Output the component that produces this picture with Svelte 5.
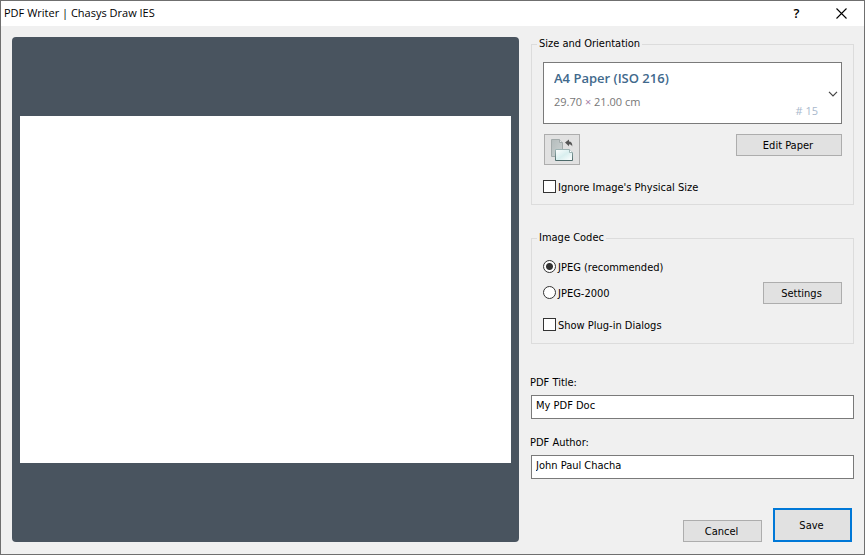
<script lang="ts">
  interface Paper {
    id: number;
    name: string;
    width: number; // cm
    height: number;
  }

  const papers: Paper[] = [{ id: 15, name: "A4 Paper (ISO 216)", width: 29.7, height: 21 }];

  let paperId = $state(15);
  let landscape = $state(true);
  let ignoreSize = $state(false);
  let codec = $state("jpeg");
  let showDialogs = $state(false);
  let title = $state("My PDF Doc");
  let author = $state("John Paul Chacha");

  const paper = $derived(papers.find((p) => p.id === paperId) ?? papers[0]);
  const w = $derived(landscape ? paper.width : paper.height);
  const h = $derived(landscape ? paper.height : paper.width);
</script>

<div class="window">
  <header class="titlebar">
    <h1>PDF Writer | Chasys Draw IES</h1>
    <button class="caption help" type="button" aria-label="Help">?</button>
    <button class="caption" type="button" aria-label="Close">
      <svg width="11" height="11" viewBox="0 0 11 11" aria-hidden="true">
        <path d="M.5.5l10 10M10.5.5l-10 10" stroke="#000" stroke-width="1.1" fill="none" />
      </svg>
    </button>
  </header>

  <form class="body" onsubmit={(e) => e.preventDefault()}>
    <div class="preview">
      <div class="page" style="aspect-ratio: {w} / {h};"></div>
    </div>

    <div class="side">
      <fieldset class="size">
        <legend>Size and Orientation</legend>
        <div class="combo">
          <select bind:value={paperId} aria-label="Paper">
            {#each papers as p}
              <option value={p.id}>{p.name}</option>
            {/each}
          </select>
          <span class="dims">{w.toFixed(2)} <i>×</i> {h.toFixed(2)} cm</span>
          <span class="number"># {paper.id}</span>
          <svg class="chevron" width="10" height="6" viewBox="0 0 10 6" aria-hidden="true">
            <path d="M1 .8l4 4 4-4" stroke="#444" stroke-width="1.2" fill="none" />
          </svg>
        </div>
        <div class="row">
          <button
            class="rotate"
            type="button"
            aria-label="Rotate paper"
            onclick={() => (landscape = !landscape)}
          >
            <svg width="24" height="24" viewBox="0 0 24 24" aria-hidden="true">
              <defs>
                <linearGradient id="back" x1="0" y1="0" x2="1" y2="1">
                  <stop offset="0" stop-color="#b4bcbc" />
                  <stop offset="1" stop-color="#cdd3d3" />
                </linearGradient>
                <linearGradient id="front" x1="0" y1="0" x2="1" y2="1">
                  <stop offset="0" stop-color="#fff" />
                  <stop offset=".5" stop-color="#d9efef" />
                  <stop offset="1" stop-color="#fff" />
                </linearGradient>
                <linearGradient id="edge" x1="0" y1="0" x2="0" y2="1">
                  <stop offset="0" stop-color="#9db4b4" />
                  <stop offset="1" stop-color="#4d6a6a" />
                </linearGradient>
              </defs>
              <path d="M1.5 1.5h8l3 3v14h-11z" fill="url(#back)" stroke="#a2aaaa" />
              <path d="M9.5 1.5v3h3" fill="#e4e8e8" stroke="#a2aaaa" />
              <path d="M5.5 11.5h14l3 3v8h-17z" fill="url(#front)" stroke="url(#edge)" />
              <path d="M19.5 11.5v3h3" fill="#fff" stroke="#9db4b4" />
              <path d="M15 4.6l4-3.2v2c2.2 0 3.5 1.7 3.3 5.1-.8-1.5-1.7-2.2-3.3-2.2v1.9z" fill="#555" />
            </svg>
          </button>
          <button class="btn edit" type="button">Edit Paper</button>
        </div>
        <label class="check">
          <input type="checkbox" bind:checked={ignoreSize} />
          Ignore Image's Physical Size
        </label>
      </fieldset>

      <fieldset class="codec">
        <legend>Image Codec</legend>
        <label class="check">
          <input type="radio" name="codec" value="jpeg" bind:group={codec} />
          JPEG (recommended)
        </label>
        <div class="row center">
          <label class="check">
            <input type="radio" name="codec" value="jpeg2000" bind:group={codec} />
            JPEG-2000
          </label>
          <button class="btn" type="button">Settings</button>
        </div>
        <label class="check">
          <input type="checkbox" bind:checked={showDialogs} />
          Show Plug-in Dialogs
        </label>
      </fieldset>

      <div class="fields">
        <div class="field">
          <label for="title">PDF Title:</label>
          <input id="title" type="text" bind:value={title} />
        </div>
        <div class="field">
          <label for="author">PDF Author:</label>
          <input id="author" type="text" bind:value={author} />
        </div>
      </div>

      <div class="actions">
        <button class="btn" type="button">Cancel</button>
        <button class="btn save" type="submit">Save</button>
      </div>
    </div>
  </form>
</div>

<style>
  :global(body) {
    margin: 0;
  }
  .window {
    box-sizing: border-box;
    min-height: 100vh;
    display: flex;
    flex-direction: column;
    border: 1px solid #6f6f6f;
    background: #f0f0f0;
    color: #000;
    font: 11px/14px "DejaVu Sans Condensed", "DejaVu Sans", sans-serif;
  }
  .window :is(button, input, select) {
    box-sizing: border-box;
    margin: 0;
    font: inherit;
    color: inherit;
  }
  .titlebar {
    display: flex;
    align-items: center;
    height: 25px;
    background: #fff;
  }
  h1 {
    flex: 1;
    margin: 0;
    padding: 0 0 2px 3px;
    font: 11px/16px "Open Sans", sans-serif;
  }
  .titlebar .caption {
    display: grid;
    place-items: center;
    width: 45px;
    height: 25px;
    padding: 0;
    border: 0;
    background: none;
  }
  .titlebar .help {
    padding-bottom: 2px;
    font: 600 13px/16px "Open Sans", sans-serif;
  }
  .body {
    flex: 1;
    display: grid;
    grid-template-columns: minmax(0, 1fr) 323px;
    gap: 12px;
    padding: 11px 10px 12px 11px;
  }
  .preview {
    display: flex;
    align-items: center;
    padding: 8px;
    border-radius: 4px;
    background: #49545f;
  }
  .page {
    width: 100%;
    background: #fff;
  }
  .side {
    display: flex;
    flex-direction: column;
  }
  fieldset {
    min-width: 0;
    margin: 0;
    border: 1px solid #dcdcdc;
  }
  legend {
    margin-left: -6px;
    padding: 0 2px;
  }
  .size {
    padding: 11px 11px 10px;
  }
  .codec {
    margin-top: 26px;
    padding: 15px 11px 11px;
  }
  .combo {
    position: relative;
  }
  .combo select {
    display: block;
    width: 100%;
    height: 62px;
    padding: 4px 30px 34px 10px;
    appearance: none;
    border: 1px solid #7a7a7a;
    border-radius: 0;
    background: #fff;
    color: #41698c;
    font: 600 13px/20px "Open Sans", sans-serif;
  }
  .combo span,
  .combo svg {
    position: absolute;
    pointer-events: none;
  }
  .dims {
    left: 11px;
    top: 32px;
    color: #777;
    font: 11px/16px "Open Sans", sans-serif;
  }
  .dims i {
    font-style: normal;
    color: #a77fa7;
  }
  .number {
    right: 24px;
    top: 41px;
    color: #a9b8cc;
    font: 11px/16px "Open Sans", sans-serif;
  }
  .chevron {
    right: 4px;
    top: 29px;
  }
  .row {
    display: flex;
    justify-content: space-between;
    align-items: flex-start;
  }
  .size .row {
    margin: 10px 0 15px 1px;
  }
  .center {
    align-items: center;
    margin: 8px 0 14px;
  }
  .btn {
    width: 79px;
    height: 22px;
    padding: 2px 2px 0 0;
    border: 1px solid #adadad;
    background: #e1e1e1;
  }
  .edit {
    width: 106px;
  }
  .rotate {
    display: grid;
    place-items: center;
    width: 36px;
    height: 31px;
    padding: 0;
    border: 1px solid #adadad;
    background: #e1e1e1;
  }
  .check {
    display: flex;
    align-items: flex-start;
    gap: 2px;
    height: 14px;
    line-height: 16px;
  }
  .check input {
    appearance: none;
    width: 13px;
    height: 13px;
    border: 1px solid #333;
    background: #fff;
  }
  .check input[type="radio"] {
    border-radius: 50%;
  }
  .check input[type="radio"]:checked {
    background: radial-gradient(circle, #333 3px, #fff 4px);
  }
  .check input[type="checkbox"]:checked {
    background: linear-gradient(#333, #333) center / 7px 7px no-repeat #fff;
  }
  .fields {
    display: grid;
    gap: 17px;
    margin: 32px 0 16px;
  }
  .field {
    display: grid;
    gap: 5px;
  }
  .field label {
    margin-left: -1px;
  }
  .field input {
    width: 100%;
    height: 24px;
    padding: 0 4px 4px;
    border: 1px solid #7a7a7a;
    background: #fff;
  }
  .actions {
    display: flex;
    justify-content: flex-end;
    align-items: flex-end;
    gap: 11px;
    margin-top: auto;
    padding-right: 2px;
  }
  .save {
    height: 34px;
    border: 2px solid #0078d7;
  }
</style>
